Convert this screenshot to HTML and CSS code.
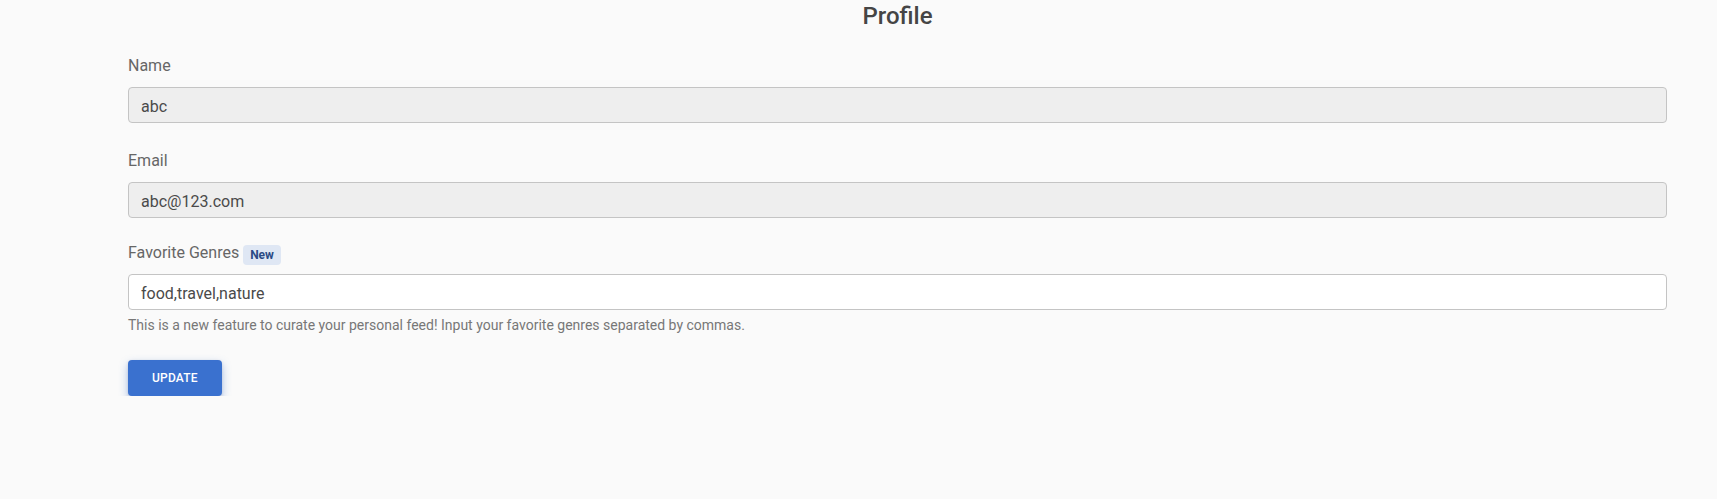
FILE: index.html
```html
<!DOCTYPE html>
<html lang="en">
<head>
<meta charset="utf-8">
<title>Profile</title>
<link rel="stylesheet" href="styles.css">
</head>
<body>
<main class="page">
  <h1 class="title">Profile</h1>
  <form class="form">
    <div class="field field-first">
      <label class="label" for="name">Name</label>
      <input id="name" class="input input-disabled" type="text" value="abc" disabled>
    </div>
    <div class="field">
      <label class="label" for="email">Email</label>
      <input id="email" class="input input-disabled" type="text" value="abc@123.com" disabled>
    </div>
    <div class="field field-genres">
      <div class="label-row">
        <label class="label" for="genres">Favorite Genres</label>
        <span class="badge">New</span>
      </div>
      <input id="genres" class="input" type="text" value="food,travel,nature">
      <p class="helper">This is a new feature to curate your personal feed! Input your favorite genres separated by commas.</p>
    </div>
    <button type="button" class="btn">Update</button>
  </form>
</main>
</body>
</html>
```

FILE: styles.css
```css
* { box-sizing: border-box; }

html, body {
  margin: 0;
  padding: 0;
  background: #fafafa;
  font-family: Roboto, "Liberation Sans", Arial, sans-serif;
}

.page {
  padding: 0 50px 0 128px;
}

.title {
  margin: 0;
  font-size: 24px;
  line-height: 32px;
  font-weight: 500;
  color: #454545;
  text-align: center;
}

.form {
  display: flex;
  flex-direction: column;
  align-items: flex-start;
}

.field {
  width: 100%;
  display: flex;
  flex-direction: column;
  margin-top: 26px;
}

.field-first { margin-top: 22px; }
.field-genres { margin-top: 23px; }

.label-row {
  display: flex;
  align-items: flex-end;
  gap: 4px;
  height: 24px;
}

.label {
  font-size: 16px;
  line-height: 24px;
  color: #666666;
}

.badge {
  display: inline-flex;
  align-items: center;
  justify-content: center;
  height: 20px;
  padding: 0 7px;
  border-radius: 4px;
  background: #dfe7f4;
  color: #2b4b84;
  font-size: 12px;
  font-weight: 700;
}

.input {
  margin-top: 9px;
  width: 100%;
  height: 36px;
  padding: 2px 12px 0;
  border: 1px solid #c4c4c4;
  border-radius: 4px;
  background: #ffffff;
  font-family: inherit;
  font-size: 16px;
  color: #4a4a4a;
  outline: none;
}

.input-disabled {
  background: #eeeeee;
  color: #4a4a4a;
  -webkit-text-fill-color: #4a4a4a;
  opacity: 1;
}

.helper {
  margin: 5px 0 0;
  font-size: 14px;
  line-height: 20px;
  color: #777777;
}

.btn {
  margin-top: 25px;
  height: 36px;
  padding: 0 24px;
  border: none;
  border-radius: 4px;
  background: #3a71cf;
  color: #ffffff;
  font-family: inherit;
  font-size: 12px;
  font-weight: 500;
  letter-spacing: 0.2px;
  text-transform: uppercase;
  box-shadow: 0 4px 10px rgba(58, 113, 207, 0.4), 0 1px 3px rgba(0, 0, 0, 0.12);
  cursor: pointer;
}
```
